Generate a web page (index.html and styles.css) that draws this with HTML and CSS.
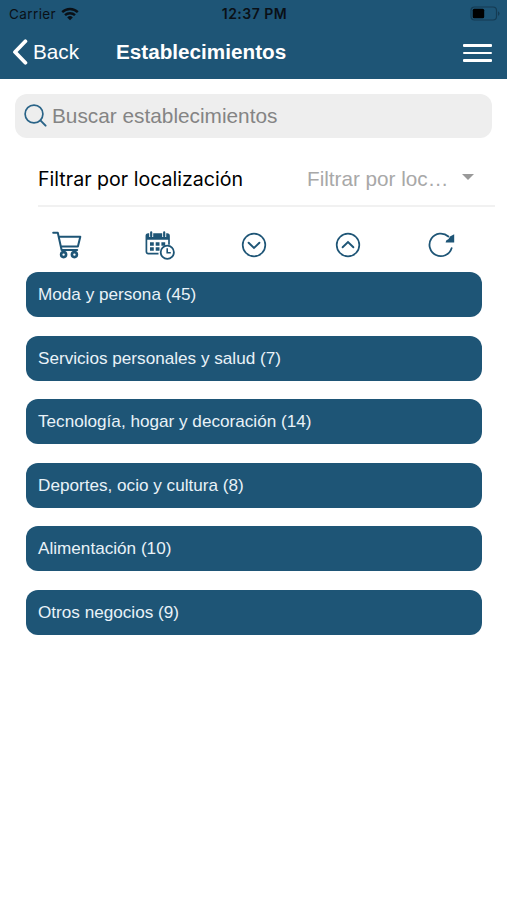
FILE: index.html
```html
<!DOCTYPE html>
<html lang="es">
<head>
  <meta charset="UTF-8">
  <meta name="viewport" content="width=device-width, initial-scale=1.0">
  <title>Establecimientos</title>
  <link rel="stylesheet" href="styles.css">
</head>
<body>
  <header class="header">
    <div class="status-bar">
      <div class="carrier">
        <span>Carrier</span>
        <svg class="wifi" width="18" height="14" viewBox="0 0 18 14">
          <path d="M1.2 5.2a11.2 11.2 0 0 1 15.6 0M4 8.2a7.2 7.2 0 0 1 10 0" fill="none" stroke="#0a1016" stroke-width="2.4"/>
          <path d="M9 13.2L6.2 10.4a4 4 0 0 1 5.6 0z" fill="#0a1016"/>
        </svg>
      </div>
      <div class="time">12:37 PM</div>
      <svg class="battery" width="30" height="15" viewBox="0 0 30 15">
        <rect x="1" y="1" width="25.5" height="13" rx="3.5" fill="none" stroke="#143b53" stroke-width="1.2"/>
        <rect x="2.7" y="2.8" width="11.5" height="9.4" rx="1.5" fill="#000"/>
        <path d="M28 5.2a2.5 2.5 0 0 1 0 4.6z" fill="#143b53"/>
      </svg>
    </div>
    <div class="nav-bar">
      <a class="back" href="#">
        <svg width="16" height="26" viewBox="0 0 16 26">
          <path d="M13.4 2.3L3 13l10.4 10.7" fill="none" stroke="#fff" stroke-width="3.8" stroke-linecap="round" stroke-linejoin="round"/>
        </svg>
        <span>Back</span>
      </a>
      <h1 class="title">Establecimientos</h1>
      <button class="menu" aria-label="Menú">
        <span></span>
        <span></span>
        <span></span>
      </button>
    </div>
  </header>

  <main>
    <div class="search">
      <svg width="24" height="24" viewBox="0 0 24 24" fill="none" stroke="#2a6488" stroke-width="1.7" stroke-linecap="round">
        <circle cx="10" cy="10" r="8.9"/>
        <path d="M16.4 16.4l5.2 5.2" stroke-width="2"/>
      </svg>
      <input type="text" placeholder="Buscar establecimientos">
    </div>

    <div class="filter">
      <span class="filter-label">Filtrar por localización</span>
      <span class="filter-value">Filtrar por loc…</span>
      <span class="filter-arrow"></span>
    </div>

    <div class="toolbar">
      <button aria-label="Tienda">
        <svg width="30" height="28" viewBox="0 0 30 28" fill="none" stroke="#1e5576" stroke-width="2" stroke-linecap="round" stroke-linejoin="round">
          <path d="M1.2 1.8h4.6l3.8 17.2h15.6M6.9 5.8h21.4l-2.4 9.6H8.9"/>
          <circle cx="11.6" cy="23.6" r="2.5" stroke-width="2.6"/>
          <circle cx="22.4" cy="23.6" r="2.5" stroke-width="2.6"/>
        </svg>
      </button>
      <button aria-label="Reservas">
        <svg width="30" height="29" viewBox="0 0 30 29" fill="none" stroke="#1e5576">
          <path d="M13.5 22.6H3.2a1.8 1.8 0 0 1-1.8-1.8V4.8A1.8 1.8 0 0 1 3.2 3h19a1.8 1.8 0 0 1 1.8 1.8v9" stroke-width="1.7"/>
          <path d="M1.4 4.8A1.8 1.8 0 0 1 3.2 3h19a1.8 1.8 0 0 1 1.8 1.8v4H1.4z" fill="#1e5576" stroke="none"/>
          <path d="M6.2 0v6M19.2 0v6" stroke="#fff" stroke-width="4"/>
          <path d="M6.2 1.4v3.8M19.2 1.4v3.8" stroke-width="2.2" stroke-linecap="round"/>
          <path d="M5 13h3.8M10.7 13h3.8M16.4 13h3.8M5 18.1h3.8M10.7 18.1h3.8" stroke-width="3.5"/>
          <circle cx="22.3" cy="21.3" r="6.6" fill="#fff" stroke-width="1.8"/>
          <path d="M22.2 17.2v4.6h3.6" stroke-width="1.6"/>
        </svg>
      </button>
      <button aria-label="Desplegar">
        <svg width="26" height="26" viewBox="0 0 26 26" fill="none" stroke="#1e5576" stroke-width="1.7" stroke-linecap="round">
          <circle cx="13" cy="13" r="11.3"/>
          <path d="M7.6 10.7l5.4 5.3 5.4-5.3" stroke-width="1.9"/>
        </svg>
      </button>
      <button aria-label="Plegar">
        <svg width="26" height="26" viewBox="0 0 26 26" fill="none" stroke="#1e5576" stroke-width="1.7" stroke-linecap="round">
          <circle cx="13" cy="13" r="11.3"/>
          <path d="M7.6 15.3l5.4-5.3 5.4 5.3" stroke-width="1.9"/>
        </svg>
      </button>
      <button aria-label="Recargar">
        <svg width="27" height="26" viewBox="0 0 27 26" fill="none" stroke="#1e5576" stroke-width="1.8" stroke-linecap="round">
          <path d="M23.6 16.2A11.3 11.3 0 1 1 20.4 4.5"/>
          <path d="M26.2 2.2v8.2h-8.6l.6-2 2.4-1.4 1.4-2.6z" fill="#1e5576" stroke="none"/>
        </svg>
      </button>
    </div>

    <ul class="categories">
      <li>Moda y persona (45)</li>
      <li>Servicios personales y salud (7)</li>
      <li>Tecnología, hogar y decoración (14)</li>
      <li>Deportes, ocio y cultura (8)</li>
      <li>Alimentación (10)</li>
      <li>Otros negocios (9)</li>
    </ul>
  </main>
</body>
</html>
```
FILE: styles.css
```css
* {
  box-sizing: border-box;
}
body {
  margin: 0;
  min-height: 100vh;
  background: #fff;
  font-family: "Liberation Sans", Arial, sans-serif;
}
button {
  padding: 0;
  border: none;
  background: none;
}
svg {
  display: block;
}

/* Header */
.header {
  height: 79px;
  background: #1e5576;
}
.status-bar {
  display: grid;
  grid-template-columns: 1fr auto 1fr;
  align-items: center;
  height: 27px;
  padding: 0 7px 0 9px;
  font-family: Inter, sans-serif;
  font-size: 13.5px;
  color: #0a1016;
}
.carrier {
  display: flex;
  align-items: center;
  gap: 5px;
  letter-spacing: 0.4px;
}
.time {
  font-size: 14px;
  font-weight: 600;
  letter-spacing: 0.5px;
}
.battery {
  justify-self: end;
}
.nav-bar {
  display: flex;
  align-items: center;
  height: 50px;
  padding: 0 15px 0 12px;
  color: #fff;
}
.back {
  display: flex;
  align-items: center;
  gap: 5px;
  width: 104px;
  color: #fff;
  font-size: 20.7px;
  text-decoration: none;
}
.title {
  flex: 1;
  margin: 0;
  font-size: 20.7px;
  font-weight: 700;
}
.menu {
  display: flex;
  flex-direction: column;
  gap: 4.5px;
  width: 29px;
  margin-top: 2px;
}
.menu span {
  height: 2.7px;
  border-radius: 1px;
  background: #fff;
}

/* Search */
.search {
  display: flex;
  align-items: center;
  gap: 4px;
  height: 44px;
  margin: 15px 15px 0;
  padding: 0 9px;
  border-radius: 12px;
  background: #eee;
}
.search input {
  flex: 1;
  padding: 0;
  border: none;
  outline: none;
  background: none;
  font-family: inherit;
  font-size: 20.8px;
}
.search input::placeholder {
  color: #848484;
}

/* Filter */
.filter {
  display: flex;
  align-items: center;
  height: 69px;
  margin: 0 12px 0 38px;
  padding-top: 28px;
  padding-bottom: 14px;
  border-bottom: 2px solid #f1f1f1;
  font-size: 20.7px;
}
.filter-label {
  flex: 1;
  font-family: Inter, sans-serif;
  font-size: 19.6px;
  color: #000;
}
.filter-value {
  width: 143px;
  white-space: nowrap;
  color: #a8a8a8;
}
.filter-arrow {
  margin: -3px 21px 0 12px;
  border: 6px solid transparent;
  border-top-color: #999;
  border-bottom: none;
}

/* Toolbar */
.toolbar {
  display: grid;
  grid-template-columns: repeat(5, 1fr);
  align-items: center;
  justify-items: center;
  height: 65px;
  margin: 0 19px 0 20px;
  padding-top: 11px;
}

/* Categories */
.categories {
  display: flex;
  flex-direction: column;
  gap: 18.5px;
  margin: 0;
  padding: 0.3px 25px 0 26px;
  list-style: none;
}
.categories li {
  height: 45px;
  padding-left: 12px;
  border-radius: 12px;
  background: #1e5576;
  color: #e9f2f8;
  font-size: 17.15px;
  line-height: 45px;
}
```
